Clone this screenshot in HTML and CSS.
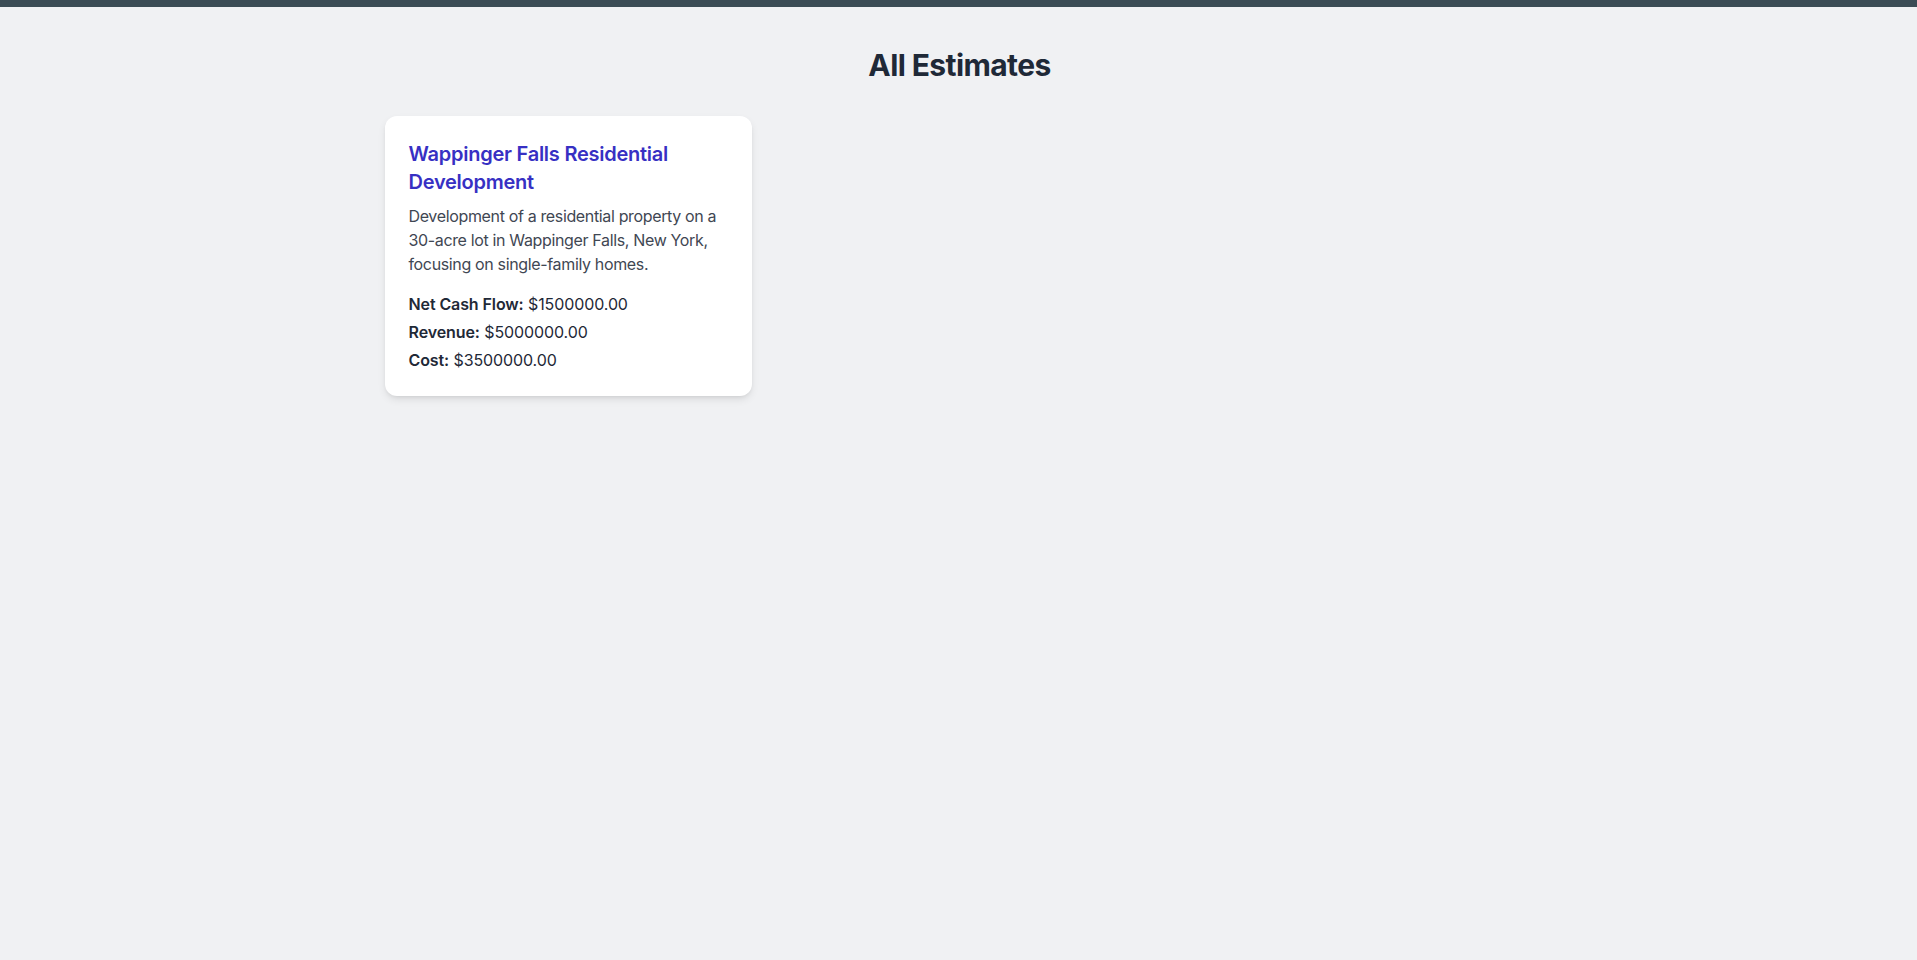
FILE: index.html
```html
<!DOCTYPE html>
<html lang="en">
<head>
<meta charset="utf-8">
<title>All Estimates</title>
<link rel="stylesheet" href="styles.css">
</head>
<body>
<div class="topbar"></div>
<main class="page">
  <h1 class="page-title">All Estimates</h1>
  <div class="grid">
    <div class="card">
      <h2 class="card-title">Wappinger Falls Residential Development</h2>
      <p class="card-desc">Development of a residential property on a 30-acre lot in Wappinger Falls, New York, focusing on single-family homes.</p>
      <div class="stats">
        <p class="stat"><strong>Net Cash Flow:</strong> $1500000.00</p>
        <p class="stat"><strong>Revenue:</strong> $5000000.00</p>
        <p class="stat"><strong>Cost:</strong> $3500000.00</p>
      </div>
    </div>
  </div>
</main>
</body>
</html>
```

FILE: styles.css
```css
* { box-sizing: border-box; }
html, body { margin: 0; padding: 0; }
body {
  background: #f0f1f3;
  font-family: Inter, "Noto Sans", "Liberation Sans", sans-serif;
  color: #1f2937;
  min-height: 960px;
}
.topbar {
  height: 7px;
  background: #3b4c55;
}
.page {
  max-width: 1152px;
  margin: 0 auto;
  padding: 40px 0 0 2px;
}
.page-title {
  margin: 0 0 33px;
  text-align: center;
  font-size: 30px;
  line-height: 36px;
  font-weight: 700;
  letter-spacing: -0.6px;
  color: #1f2937;
}
.grid {
  display: grid;
  grid-template-columns: repeat(3, 1fr);
  gap: 24px;
  align-items: start;
}
.card {
  background: #ffffff;
  border-radius: 12px;
  padding: 24px;
  box-shadow: 0 4px 8px -1px rgba(0,0,0,0.1), 0 2px 4px -2px rgba(0,0,0,0.1);
}
.card-title {
  margin: 0 0 8px;
  font-size: 20px;
  line-height: 28px;
  font-weight: 600;
  letter-spacing: -0.25px;
  color: #3730c3;
}
.card-desc {
  margin: 0 0 16px;
  font-size: 16px;
  line-height: 24px;
  letter-spacing: -0.35px;
  color: #3f4753;
}
.stats {
  display: flex;
  flex-direction: column;
  gap: 4px;
}
.stat {
  margin: 0;
  font-size: 16px;
  line-height: 24px;
  letter-spacing: -0.1px;
  color: #1f2937;
}
.stat strong { font-weight: 600; }
```
